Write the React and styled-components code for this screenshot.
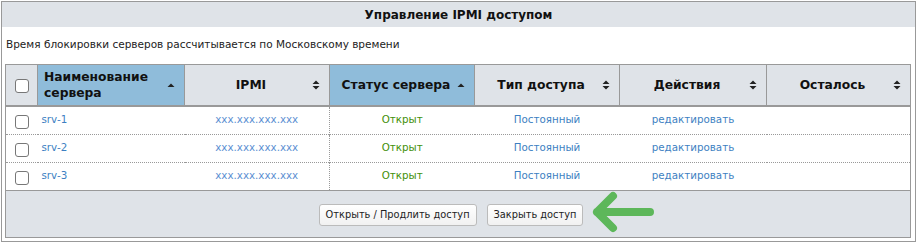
import React from 'react'
import styled, { createGlobalStyle } from 'styled-components'

const GlobalStyle = createGlobalStyle`
  body {
    margin: 0;
    background: #fff;
    font-family: Verdana, "DejaVu Sans", sans-serif;
    font-size: 11px;
    color: #222;
  }
`

const Panel = styled.div`
  position: relative;
  width: 913px;
  height: 239px;
  margin: 1px;
  border: 1px solid #999;
  box-sizing: content-box;
`

const Title = styled.div`
  height: 25px;
  background: #dfe3e8;
  font-weight: bold;
  font-size: 12px;
  line-height: 26px;
  text-align: center;
  color: #111;
`

const Body = styled.div`
  padding: 0 3px 3px 3px;
`

const Note = styled.div`
  padding: 10px 1px 0;
  height: 27px;
  font-size: 10.5px;
  line-height: 15px;
  color: #222;
`

const Table = styled.table`
  width: 905px;
  border-collapse: collapse;
  table-layout: fixed;
  border: 1px solid #999;
`

const HeadCell = styled.th`
  position: relative;
  height: 40px;
  padding: 0 20px 0 ${p => (p.$left ? '6px' : '8px')};
  border: 1px solid #999;
  border-bottom: 2px solid #999;
  background: ${p => (p.$sorted ? '#8fbcda' : '#dfe3e8')};
  font-size: 12.3px;
  font-weight: bold;
  line-height: 16px;
  color: #111;
  text-align: ${p => (p.$left ? 'left' : 'center')};
  vertical-align: middle;
`

const CheckHead = styled.th`
  height: 40px;
  padding: 0;
  border: 1px solid #999;
  border-bottom: 2px solid #999;
  background: #dfe3e8;
  text-align: center;
`

const SortMark = styled.span`
  position: absolute;
  right: 9px;
  top: 50%;
  transform: translateY(-50%);
  display: flex;
`

const Row = styled.tr`
  border-bottom: 1px dotted #999;
  &:last-child {
    border-bottom: none;
  }
`

const Cell = styled.td`
  height: 27px;
  padding: 0 ${p => (p.$left ? '4px' : '0')};
  text-align: ${p => (p.$left ? 'left' : 'center')};
  vertical-align: top;
  font-size: 10.3px;
  line-height: 25px;
  color: ${p => p.$color || '#3d7fc2'};
  border-left: ${p => (p.$dotted ? '1px dotted #999' : 'none')};
  white-space: nowrap;
`

const CheckCell = styled.td`
  padding: 0;
  text-align: center;
  vertical-align: middle;
`

const Box = styled.span`
  display: inline-block;
  width: 12px;
  height: 12px;
  border: 1px solid #777;
  border-radius: 3px;
  background: #fff;
  vertical-align: middle;
  margin-top: ${p => (p.$head ? '1px' : '2px')};
`

const FootCell = styled.td`
  padding: 0;
  height: 46px;
  background: #dfe3e8;
  border-top: 1px solid #999;
`

const Buttons = styled.div`
  display: flex;
  justify-content: center;
  align-items: center;
  gap: 10px;
  padding-right: 14px;
  height: 46px;
`

const Button = styled.button`
  height: 22px;
  padding: 0 6px;
  border: 1px solid #bbb;
  border-radius: 3px;
  background: linear-gradient(#fff, #f1f1f1);
  font-family: Verdana, "DejaVu Sans", sans-serif;
  font-size: 9.8px;
  color: #222;
  margin-top: 1px;
`

const Arrow = styled.svg`
  position: absolute;
  left: 586px;
  top: 186px;
`

const UpIcon = () => (
  <svg width="8" height="5" viewBox="0 0 8 5">
    <path d="M0.5 4.5 L4 1 L7.5 4.5 Z" fill="#222" />
  </svg>
)

const BothIcon = () => (
  <svg width="8" height="10" viewBox="0 0 8 10">
    <path d="M0.5 4 L4 0.5 L7.5 4 Z M0.5 6 L4 9.5 L7.5 6 Z" fill="#222" />
  </svg>
)

const columns = [
  { title: 'Наименование сервера', sorted: true, left: true },
  { title: 'IPMI' },
  { title: 'Статус сервера', sorted: true },
  { title: 'Тип доступа' },
  { title: 'Действия' },
  { title: 'Осталось' }
]

const widths = [32, 147, 145, 145, 145, 147, 144]

const servers = ['srv-1', 'srv-2', 'srv-3']

export default function App() {
  return (
    <>
      <GlobalStyle />
      <Panel>
        <Title>Управление IPMI доступом</Title>
        <Body>
          <Note>Время блокировки серверов рассчитывается по Московскому времени</Note>
          <Table>
            <colgroup>
              {widths.map((w, i) => (
                <col key={i} style={{ width: w }} />
              ))}
            </colgroup>
            <thead>
              <tr>
                <CheckHead>
                  <Box $head />
                </CheckHead>
                {columns.map(c => (
                  <HeadCell key={c.title} $sorted={c.sorted} $left={c.left}>
                    {c.title}
                    <SortMark>{c.sorted ? <UpIcon /> : <BothIcon />}</SortMark>
                  </HeadCell>
                ))}
              </tr>
            </thead>
            <tbody>
              {servers.map(name => (
                <Row key={name}>
                  <CheckCell>
                    <Box />
                  </CheckCell>
                  <Cell $left>{name}</Cell>
                  <Cell $color="#5b8fd2">xxx.xxx.xxx.xxx</Cell>
                  <Cell $dotted $color="#3f8f08">Открыт</Cell>
                  <Cell>Постоянный</Cell>
                  <Cell>редактировать</Cell>
                  <Cell />
                </Row>
              ))}
            </tbody>
            <tfoot>
              <tr>
                <FootCell colSpan={7}>
                  <Buttons>
                    <Button>Открыть / Продлить доступ</Button>
                    <Button>Закрыть доступ</Button>
                  </Buttons>
                </FootCell>
              </tr>
            </tfoot>
          </Table>
        </Body>
        <Arrow width="70" height="48" viewBox="0 0 70 48">
          <path
            d="M9 24 L62 24 M25 8 L9 24 L25 40"
            fill="none"
            stroke="#5db75a"
            strokeWidth="8"
            strokeLinecap="round"
            strokeLinejoin="round"
          />
        </Arrow>
      </Panel>
    </>
  )
}
